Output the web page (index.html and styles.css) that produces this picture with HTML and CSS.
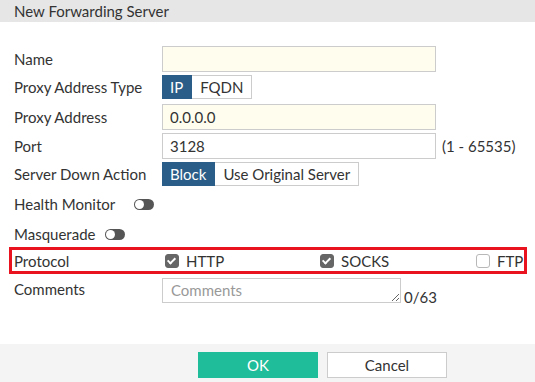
FILE: index.html
```html
<!DOCTYPE html>
<html lang="en">
<head>
    <meta charset="UTF-8">
    <title>New Forwarding Server</title>
    <link rel="stylesheet" href="styles.css">
</head>
<body>
    <div class="dialog">
        <div class="dialog-header">New Forwarding Server</div>

        <div class="dialog-body">
            <div class="row row-name">
                <label class="label">Name</label>
                <input type="text" class="field field-yellow" value="">
            </div>
            <div class="row row-type">
                <label class="label">Proxy Address Type</label>
                <div class="toggle-group">
                    <span class="tg-btn active">IP</span>
                    <span class="tg-btn">FQDN</span>
                </div>
            </div>
            <div class="row row-address">
                <label class="label">Proxy Address</label>
                <input type="text" class="field field-yellow" value="0.0.0.0">
            </div>
            <div class="row row-port">
                <label class="label">Port</label>
                <input type="text" class="field" value="3128">
                <span class="hint">(1 - 65535)</span>
            </div>
            <div class="row row-action">
                <label class="label">Server Down Action</label>
                <div class="toggle-group">
                    <span class="tg-btn active">Block</span>
                    <span class="tg-btn">Use Original Server</span>
                </div>
            </div>
            <div class="row row-health">
                <span class="label-inline">Health Monitor</span>
                <span class="switch switch-health"></span>
            </div>
            <div class="row row-masq">
                <span class="label-inline">Masquerade</span>
                <span class="switch switch-masq"></span>
            </div>
            <div class="row row-protocol">
                <label class="label">Protocol</label>
                <div class="protocols">
                    <span class="check-item"><span class="checkbox checked"></span>HTTP</span>
                    <span class="check-item"><span class="checkbox checked"></span>SOCKS</span>
                    <span class="check-item"><span class="checkbox"></span>FTP</span>
                </div>
            </div>
            <div class="row row-comments">
                <label class="label">Comments</label>
                <textarea class="comments" placeholder="Comments"></textarea>
                <span class="counter">0/63</span>
            </div>
        </div>

        <div class="dialog-footer">
            <button class="btn btn-ok">OK</button>
            <button class="btn btn-cancel">Cancel</button>
        </div>
    </div>
</body>
</html>
```

FILE: styles.css
```css
body {
    margin: 0;
    padding: 0;
    background: #ffffff;
    color: #333333;
    font-family: 'Lato', 'Liberation Sans', sans-serif;
    font-size: 15px;
}

.dialog {
    width: 535px;
    height: 382px;
    display: flex;
    flex-direction: column;
}

.dialog-header {
    height: 22px;
    line-height: 22px;
    background: #e6e6e6;
    padding-left: 14px;
    font-size: 15px;
}

.dialog-body {
    flex: 1;
    padding-top: 24px;
}

.row {
    display: flex;
    align-items: center;
    padding-left: 14px;
}

.label {
    width: 148px;
    flex-shrink: 0;
}

.row-name { height: 26px; margin-bottom: 3px; }
.row-type { height: 24px; margin-bottom: 5px; }
.row-address { height: 26px; margin-bottom: 3px; }
.row-port { height: 26px; margin-bottom: 3px; }
.row-action { height: 24px; }
.row-health { height: 26px; margin-top: 5px; }
.row-masq { height: 26px; margin-top: 4px; }

.field {
    box-sizing: border-box;
    width: 274px;
    height: 26px;
    border: 1px solid #cccccc;
    padding: 0 7px;
    font-family: inherit;
    font-size: 15px;
    color: #333333;
    background: #ffffff;
    outline: none;
}

.field-yellow {
    background: #fffeee;
}

.hint {
    margin-left: 6px;
}

.toggle-group {
    display: flex;
    height: 24px;
}

.tg-btn {
    box-sizing: border-box;
    height: 24px;
    line-height: 22px;
    padding: 0 8px;
    border: 1px solid #cccccc;
    border-left: none;
    background: #ffffff;
}

.tg-btn.active {
    background: #2a5d87;
    border-color: #2a5d87;
    color: #ffffff;
}

.switch {
    display: inline-block;
    position: relative;
    width: 20px;
    height: 11px;
    border-radius: 6px;
    background: #555555;
}

.switch::after {
    content: '';
    position: absolute;
    left: 1px;
    top: 1px;
    width: 9px;
    height: 9px;
    border-radius: 50%;
    background: #ffffff;
}

.switch-health { margin-left: 19px; }
.switch-masq { margin-left: 10px; }

.row-protocol {
    box-sizing: border-box;
    height: 27px;
    margin: 0 8px 3px 9px;
    padding-left: 2px;
    border: 3px solid #e8131f;
}

.row-protocol .label {
    width: 151px;
}

.protocols {
    display: flex;
}

.check-item {
    display: flex;
    align-items: center;
    width: 155px;
}

.check-item:nth-child(2) {
    width: 156px;
}

.check-item:last-child {
    width: auto;
}

.checkbox {
    box-sizing: border-box;
    position: relative;
    width: 14px;
    height: 14px;
    margin-right: 7px;
    border: 1px solid #b8b8b8;
    border-radius: 3px;
    background: #ffffff;
}

.checkbox.checked {
    background: #666666;
    border-color: #666666;
}

.checkbox.checked::after {
    content: '';
    position: absolute;
    left: 3px;
    top: 1px;
    width: 3px;
    height: 6px;
    border: solid #ffffff;
    border-width: 0 2px 2px 0;
    transform: rotate(45deg);
}

.row-comments {
    align-items: flex-start;
}

.row-comments .label {
    padding-top: 3px;
}

.comments {
    box-sizing: border-box;
    width: 239px;
    height: 25px;
    margin-top: 1px;
    border: 1px solid #cccccc;
    padding: 2px 8px;
    font-family: inherit;
    font-size: 15px;
    color: #333333;
    resize: both;
    outline: none;
}

.comments::placeholder {
    color: #999999;
}

.counter {
    align-self: flex-end;
    margin-left: 3px;
    margin-bottom: -3px;
}

.dialog-footer {
    height: 38px;
    background: #f4f4f4;
    display: flex;
    align-items: flex-start;
    padding-top: 8px;
    padding-left: 198px;
    box-sizing: border-box;
    gap: 9px;
}

.btn {
    width: 120px;
    height: 26px;
    font-family: inherit;
    font-size: 15px;
    border: 1px solid #cccccc;
    background: #ffffff;
    color: #333333;
    cursor: pointer;
}

.btn-ok {
    background: #1fbd9a;
    border-color: #1fbd9a;
    color: #ffffff;
}
```
